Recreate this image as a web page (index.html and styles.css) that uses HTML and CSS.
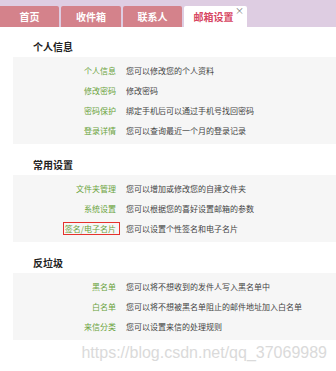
FILE: index.html
```html
<!DOCTYPE html>
<html lang="zh">
<head>
<meta charset="utf-8">
<link rel="stylesheet" href="styles.css">
</head>
<body>
<div class="page">
  <div class="tabbar">
    <div class="tab t1">首页</div>
    <div class="tab t2">收件箱</div>
    <div class="tab t3">联系人</div>
    <div class="tab active">邮箱设置<span class="close">×</span></div>
  </div>
  <div class="content">
    <section class="sec">
      <h2 class="sec-title">个人信息</h2>
      <div class="panel">
        <div class="row"><span class="lbl">个人信息</span><span class="desc">您可以修改您的个人资料</span></div>
        <div class="row"><span class="lbl">修改密码</span><span class="desc">修改密码</span></div>
        <div class="row"><span class="lbl">密码保护</span><span class="desc">绑定手机后可以通过手机号找回密码</span></div>
        <div class="row"><span class="lbl">登录详情</span><span class="desc">您可以查询最近一个月的登录记录</span></div>
      </div>
    </section>
    <section class="sec">
      <h2 class="sec-title">常用设置</h2>
      <div class="panel">
        <div class="row"><span class="lbl">文件夹管理</span><span class="desc">您可以增加或修改您的自建文件夹</span></div>
        <div class="row"><span class="lbl">系统设置</span><span class="desc">您可以根据您的喜好设置邮箱的参数</span></div>
        <div class="row"><span class="lbl"><span class="hl">签名/电子名片</span></span><span class="desc">您可以设置个性签名和电子名片</span></div>
      </div>
    </section>
    <section class="sec">
      <h2 class="sec-title">反垃圾</h2>
      <div class="panel">
        <div class="row"><span class="lbl">黑名单</span><span class="desc">您可以将不想收到的发件人写入黑名单中</span></div>
        <div class="row"><span class="lbl">白名单</span><span class="desc">您可以将不想被黑名单阻止的邮件地址加入白名单</span></div>
        <div class="row"><span class="lbl">来信分类</span><span class="desc">您可以设置来信的处理规则</span></div>
      </div>
    </section>
    <div class="watermark">https://blog.csdn.net/qq_37069989</div>
  </div>
</div>
</body>
</html>
```
FILE: styles.css
```css
* { box-sizing: border-box; margin: 0; padding: 0; }
html, body { background: #fff; }
body {
  font-family: "Noto Sans CJK SC", "Liberation Sans", sans-serif;
  width: 336px;
  height: 371px;
  overflow: hidden;
}
.tabbar {
  display: flex;
  gap: 2px;
  height: 27px;
  padding-top: 6px;
  background: #decde2;
}
.tab {
  height: 21px;
  line-height: 21px;
  width: 59px;
  text-align: center;
  font-size: 10px;
  font-weight: bold;
  color: #fff;
  background: #d4828b;
  border-radius: 2px 2px 0 0;
}
.tab.t1 { border-radius: 0 2px 0 0; }
.tab.t2 { width: 60px; }
.tab.active {
  width: 63px;
  background: #fff;
  color: #d74662;
  position: relative;
  padding-right: 4px;
}
.close {
  position: absolute;
  right: 3px;
  top: -6px;
  font-size: 9px;
  font-weight: normal;
  color: #777;
}
.content { padding-top: 10px; }
.sec + .sec { margin-top: 11px; }
.sec-title {
  font-size: 10px;
  font-weight: bold;
  color: #222;
  line-height: 20px;
  padding-left: 33px;
}
.panel {
  margin-left: 13px;
  background: #f6f6f6;
  padding: 4px 0 3px;
}
.row {
  display: grid;
  grid-template-columns: 103px 1fr;
  column-gap: 10px;
  height: 20px;
  align-items: center;
  font-size: 8px;
  line-height: 12px;
}
.lbl { text-align: right; color: #6aa33c; }
.desc { color: #444; }
.hl { position: relative; }
.hl::after {
  content: "";
  position: absolute;
  left: -2px;
  right: -4px;
  top: -1px;
  bottom: -1px;
  border: 1.5px solid #e5322d;
}
.watermark {
  margin-top: 4px;
  text-align: right;
  padding-right: 9px;
  font-family: "Liberation Sans", sans-serif;
  font-size: 16px;
  line-height: 18px;
  color: #dadada;
}
```
